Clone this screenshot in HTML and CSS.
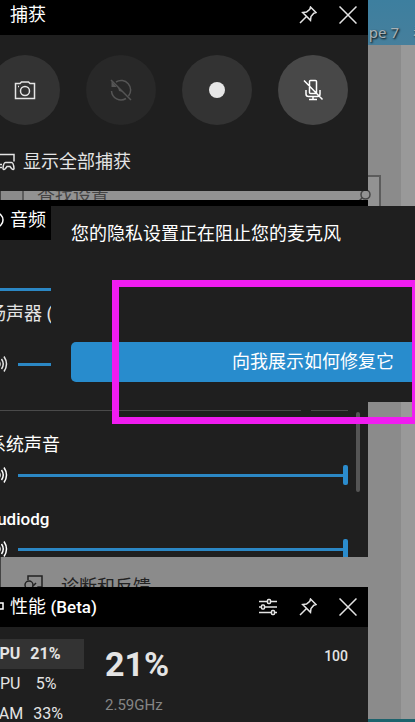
FILE: index.html
```html
<!DOCTYPE html>
<html lang="zh-CN">
<head>
<meta charset="utf-8">
<meta name="viewport" content="width=device-width, initial-scale=1">
<title>捕获</title>
<link rel="stylesheet" href="styles.css">
</head>
<body>
<svg class="defs" width="0" height="0" aria-hidden="true">
  <symbol id="pin" viewBox="0 0 18 18"><path d="M11.5 1 17 6.500 14.800 7.200 12 10.500 11.500 14.300 3.700 6.500 7.500 6 10.800 3.200ZM7.500 10.500 1 17"/></symbol>
  <symbol id="close" viewBox="0 0 18 18"><path d="M.5.5l17 17M17.500.5l-17 17"/></symbol>
  <symbol id="volume" viewBox="0 0 20 20"><path d="M1 7h3l4-4v14l-4-4H1ZM11 7q2 3 0 6M13.500 5q3.500 5 0 10M16 2.500q5 7.500 0 15"/></symbol>
</svg>
<main class="desktop">
  <div class="shortcut"><span>pe 7</span><span>看</span></div>

  <section class="settings">
    <div class="search">
      <label class="search-label" for="find">查找设置</label>
      <input class="search-input" id="find" type="text">
      <svg class="search-icon" viewBox="0 0 14 14"><circle cx="8.500" cy="5.500" r="4.500"/><path d="M5.300 8.700.5 13.500"/></svg>
    </div>
    <a class="settings-link" href="#">
      <svg viewBox="0 0 20 24"><path d="M5 5V1h14v11h-4l-3 3M13 8l-3 3"/><circle cx="6" cy="10" r="4"/><path d="M1 22q0-7 5-7t5 7"/></svg>
      <span>诊断和反馈</span>
    </a>
  </section>

  <div class="widgets">
    <section class="panel">
      <header class="bar">
        <h2 class="title">捕获</h2>
        <button class="tool" aria-label="固定"><svg><use href="#pin"/></svg></button>
        <button class="tool" aria-label="关闭"><svg><use href="#close"/></svg></button>
      </header>
      <div class="capture">
        <button class="round" aria-label="屏幕截图"><svg viewBox="0 0 22 22"><path d="M1.500 4.500H6L7.500 3h7L16 4.500h4.500v15h-19Z"/><circle cx="11" cy="12" r="4.500"/><path d="M4 7.500h1"/></svg></button>
        <button class="round faded" aria-label="录制最后一段" disabled><svg viewBox="0 0 22 22"><path d="M6 3A9.500 9.500 0 0 1 18.500 17M16 19.500A9.500 9.500 0 0 1 1.500 12M1 1l20 20"/><path class="solid" d="M1.500 2v6h5ZM8 8l5 5-4-1Z"/></svg></button>
        <button class="round" aria-label="开始录制"><span class="dot"></span></button>
        <button class="round active" aria-label="麦克风"><svg viewBox="0 0 22 22"><path d="M7.500 2.500q0-1 1-1h5q1 0 1 1v11q0 1-1 1h-5q-1 0-1-1ZM4 11v4q0 2.500 2.500 2.500h9Q18 17.500 18 15v-4M11 17.500v3M7 20.500h8M2 1.500l18.500 19"/></svg></button>
      </div>
      <a class="all-captures" href="#">
        <svg viewBox="0 0 20 18"><path d="M7 11.500H1v-10h18v7M3 14.500h4"/><path d="M10.500 9.500h6q2 0 2.500 6-.5 2-2.500 0l-1.500-2h-3l-1.500 2q-2 2-2.500 0 .5-6 2.500-6Z"/></svg>
        <span>显示全部捕获</span>
      </a>
    </section>

    <section class="panel audio">
      <header class="bar">
        <svg class="bar-icon" viewBox="0 0 16 16"><circle cx="8" cy="8" r="7"/></svg>
        <h2 class="title">音频</h2>
      </header>
      <div class="mixer">
        <div class="mixer-main">
          <div class="volume"><input class="slider" type="range" value="100" aria-label="音量"></div>
          <label class="device" for="speaker">扬声器 (</label>
          <div class="volume"><svg class="speaker"><use href="#volume"/></svg><input class="slider" id="speaker" type="range" value="100"></div>
          <hr class="divider">
          <div class="source">
            <label for="system">系统声音</label>
            <div class="volume"><svg class="speaker"><use href="#volume"/></svg><input class="slider" id="system" type="range" value="100"></div>
          </div>
          <div class="source">
            <label class="latin" for="audiodg">audiodg</label>
            <div class="volume"><svg class="speaker"><use href="#volume"/></svg><input class="slider" id="audiodg" type="range" value="100"></div>
          </div>
        </div>
        <div class="scroll"></div>
      </div>
    </section>

    <section class="panel performance">
      <header class="bar">
        <svg class="bar-icon" viewBox="0 0 16 16"><path d="M1 4h14v6H1ZM8 10v4"/></svg>
        <h2 class="title">性能 <span class="latin">(Beta)</span></h2>
        <button class="tool" aria-label="选项"><svg class="wide" viewBox="0 0 20 18"><path d="M1 3.500h8M13 3.500h6M1 9h2M7 9h12M1 14.500h12M17 14.500h2"/><rect x="9.500" y="1.500" width="3" height="4" rx="1"/><rect x="3.500" y="7" width="3" height="4" rx="1"/><rect x="13.500" y="12.500" width="3" height="4" rx="1"/></svg></button>
        <button class="tool" aria-label="固定"><svg><use href="#pin"/></svg></button>
        <button class="tool" aria-label="关闭"><svg><use href="#close"/></svg></button>
      </header>
      <div class="stats">
        <div class="meters">
          <button class="meter selected"><span>CPU</span><span class="value">21%</span></button>
          <button class="meter"><span>GPU</span><span class="value">5%</span></button>
          <button class="meter"><span>RAM</span><span class="value">33%</span></button>
        </div>
        <div class="reading">
          <strong class="usage">21%</strong>
          <span class="clock">2.59GHz</span>
        </div>
        <span class="scale">100</span>
      </div>
    </section>
  </div>

  <div class="popup" role="dialog" aria-labelledby="notice">
    <p class="notice" id="notice">您的隐私设置正在阻止您的麦克风</p>
    <button class="fix">向我展示如何修复它</button>
  </div>
  <div class="highlight"></div>
</main>
</body>
</html>
```
FILE: styles.css
```css
* { box-sizing: border-box; }

body {
  margin: 0;
  font: 18px/24px Roboto, "Noto Sans CJK SC", sans-serif;
  color: #e4e4e4;
}

button, input { margin: 0; font: inherit; color: inherit; }
button { border: 0; padding: 0; background: none; }
a { color: inherit; text-decoration: none; }
svg { fill: none; stroke: currentColor; stroke-width: 1.5; flex: none; }
.defs { position: absolute; }
.latin { font-size: 17px; font-weight: 500; }

.desktop {
  position: relative;
  display: flex;
  min-height: 100vh;
  overflow: hidden;
  background: linear-gradient(#3d7f9f, #467f9c 45px, #1d626c 45px);
}

.shortcut {
  position: absolute;
  top: 20px;
  right: -13px;
  display: flex;
  gap: 14px;
  font-family: "Noto Sans", "Noto Sans CJK SC", sans-serif;
  font-size: 15px;
  color: #a9b2b6;
  text-shadow: 1px 1px 2px #000;
}

/* Settings window behind the overlay */
.settings {
  position: absolute;
  inset: 45px 0 3px;
  border-left: 1px solid #444;
  background: linear-gradient(to left, #999 14px, #8b8b8b 14px);
  color: #222;
}

.search {
  display: flex;
  align-items: center;
  height: 42px;
  margin: 130px 34px 0 21px;
  padding: 0 8px 0 13px;
  border: 2px solid #5c5c5c;
  background: #929292;
  color: #444;
}
.search-label { flex: none; }
.search-input { flex: 1; min-width: 0; border: 0; background: none; outline: 0; }
.search-icon { width: 14px; height: 14px; }

.settings-link {
  display: flex;
  align-items: center;
  gap: 18px;
  margin: 358px 0 0 22px;
}
.settings-link svg { width: 20px; height: 24px; }

/* Overlay widgets */
.widgets {
  position: relative;
  flex: 1;
  display: flex;
  flex-direction: column;
  margin: -5px 47px 0 -24px;
}

.panel { background: #1f1f1f; }

.bar {
  display: flex;
  align-items: center;
  height: 40px;
  padding-left: 12px;
  background: #000;
  color: #fff;
}
.bar-icon { width: 16px; height: 16px; margin-right: -16px; }
.title { flex: 1; margin: 0; padding-left: 22px; font-size: 18px; font-weight: 400; }
.tool { display: grid; place-items: center; width: 40px; height: 40px; color: #e4e4e4; }
.tool svg { width: 18px; height: 18px; }
.tool .wide { width: 20px; }

.capture { display: flex; gap: 26px; padding: 20px 0 0 14px; }
.round {
  display: grid;
  place-items: center;
  flex: none;
  width: 70px;
  height: 70px;
  border-radius: 50%;
  background: #333;
}
.round svg { width: 22px; height: 22px; }
.faded { background: #282828; color: #555; }
.faded .solid { fill: currentColor; stroke: none; }
.active { background: #484848; color: #fff; }
.dot { width: 16px; height: 16px; border-radius: 50%; background: #e6e6e6; }

.all-captures {
  display: flex;
  align-items: center;
  gap: 8px;
  padding: 25px 0 17px 19px;
}
.all-captures svg { width: 20px; height: 18px; }

.audio { height: 357px; margin-top: 9px; overflow: hidden; }
.mixer { display: flex; justify-content: space-between; padding: 39px 8px 0 12px; }
.mixer-main { flex: 1; margin-right: 8px; }
.mixer label { display: block; }
.mixer .device { margin: 3px 0 28px; }

.volume { display: flex; align-items: center; height: 20px; gap: 10px; }
.speaker { width: 20px; height: 20px; }
.slider {
  appearance: none;
  flex: 1;
  min-width: 0;
  height: 20px;
  background: linear-gradient(#2b87c4, #2b87c4) center / 100% 3px no-repeat;
}
.slider::-webkit-slider-thumb {
  appearance: none;
  width: 5px;
  height: 20px;
  border-radius: 2px;
  background: #2b8ccd;
}
.divider {
  height: 1px;
  margin: 36px 0 22px;
  border: 0;
  background: linear-gradient(to left, #4a4a4a 37px, transparent 37px 47px, #4a4a4a 47px);
}
.source { margin-bottom: 22px; color: #fff; }
.source label { margin-bottom: 8px; }
.scroll { width: 4px; height: 80px; margin-top: 133px; border-radius: 2px; background: #555; }

.performance { flex: 1; margin-top: 30px; }
.stats { display: flex; align-items: flex-start; padding: 12px 20px 0 13px; font-size: 16px; }
.meters { width: 95px; margin-bottom: -12px; }
.meter {
  display: flex;
  align-items: center;
  gap: 10px;
  width: 100%;
  height: 30px;
}
.meter .value { min-width: 26px; text-align: right; }
.selected { background: #333; font-weight: 700; }
.reading { flex: 1; display: flex; flex-direction: column; padding: 8px 0 0 21px; }
.usage { font-size: 34px; line-height: 34px; }
.clock { margin-top: 12px; font-size: 15px; color: #858585; }
.scale { margin-top: 5px; font-size: 14px; font-weight: 500; }

/* Privacy notice over the audio widget */
.popup {
  position: absolute;
  top: 206px;
  left: 51px;
  right: -160px;
  padding: 16px 20px 20px;
  background: #1f1f1f;
  color: #fff;
}
.notice { margin: 0 0 96px; }
.fix {
  display: block;
  width: 100%;
  height: 40px;
  border-radius: 5px;
  background: #288ccd;
}

.highlight {
  position: absolute;
  top: 280px;
  left: 112px;
  right: -4px;
  height: 144px;
  border: 7px solid #f01cf0;
}
```
